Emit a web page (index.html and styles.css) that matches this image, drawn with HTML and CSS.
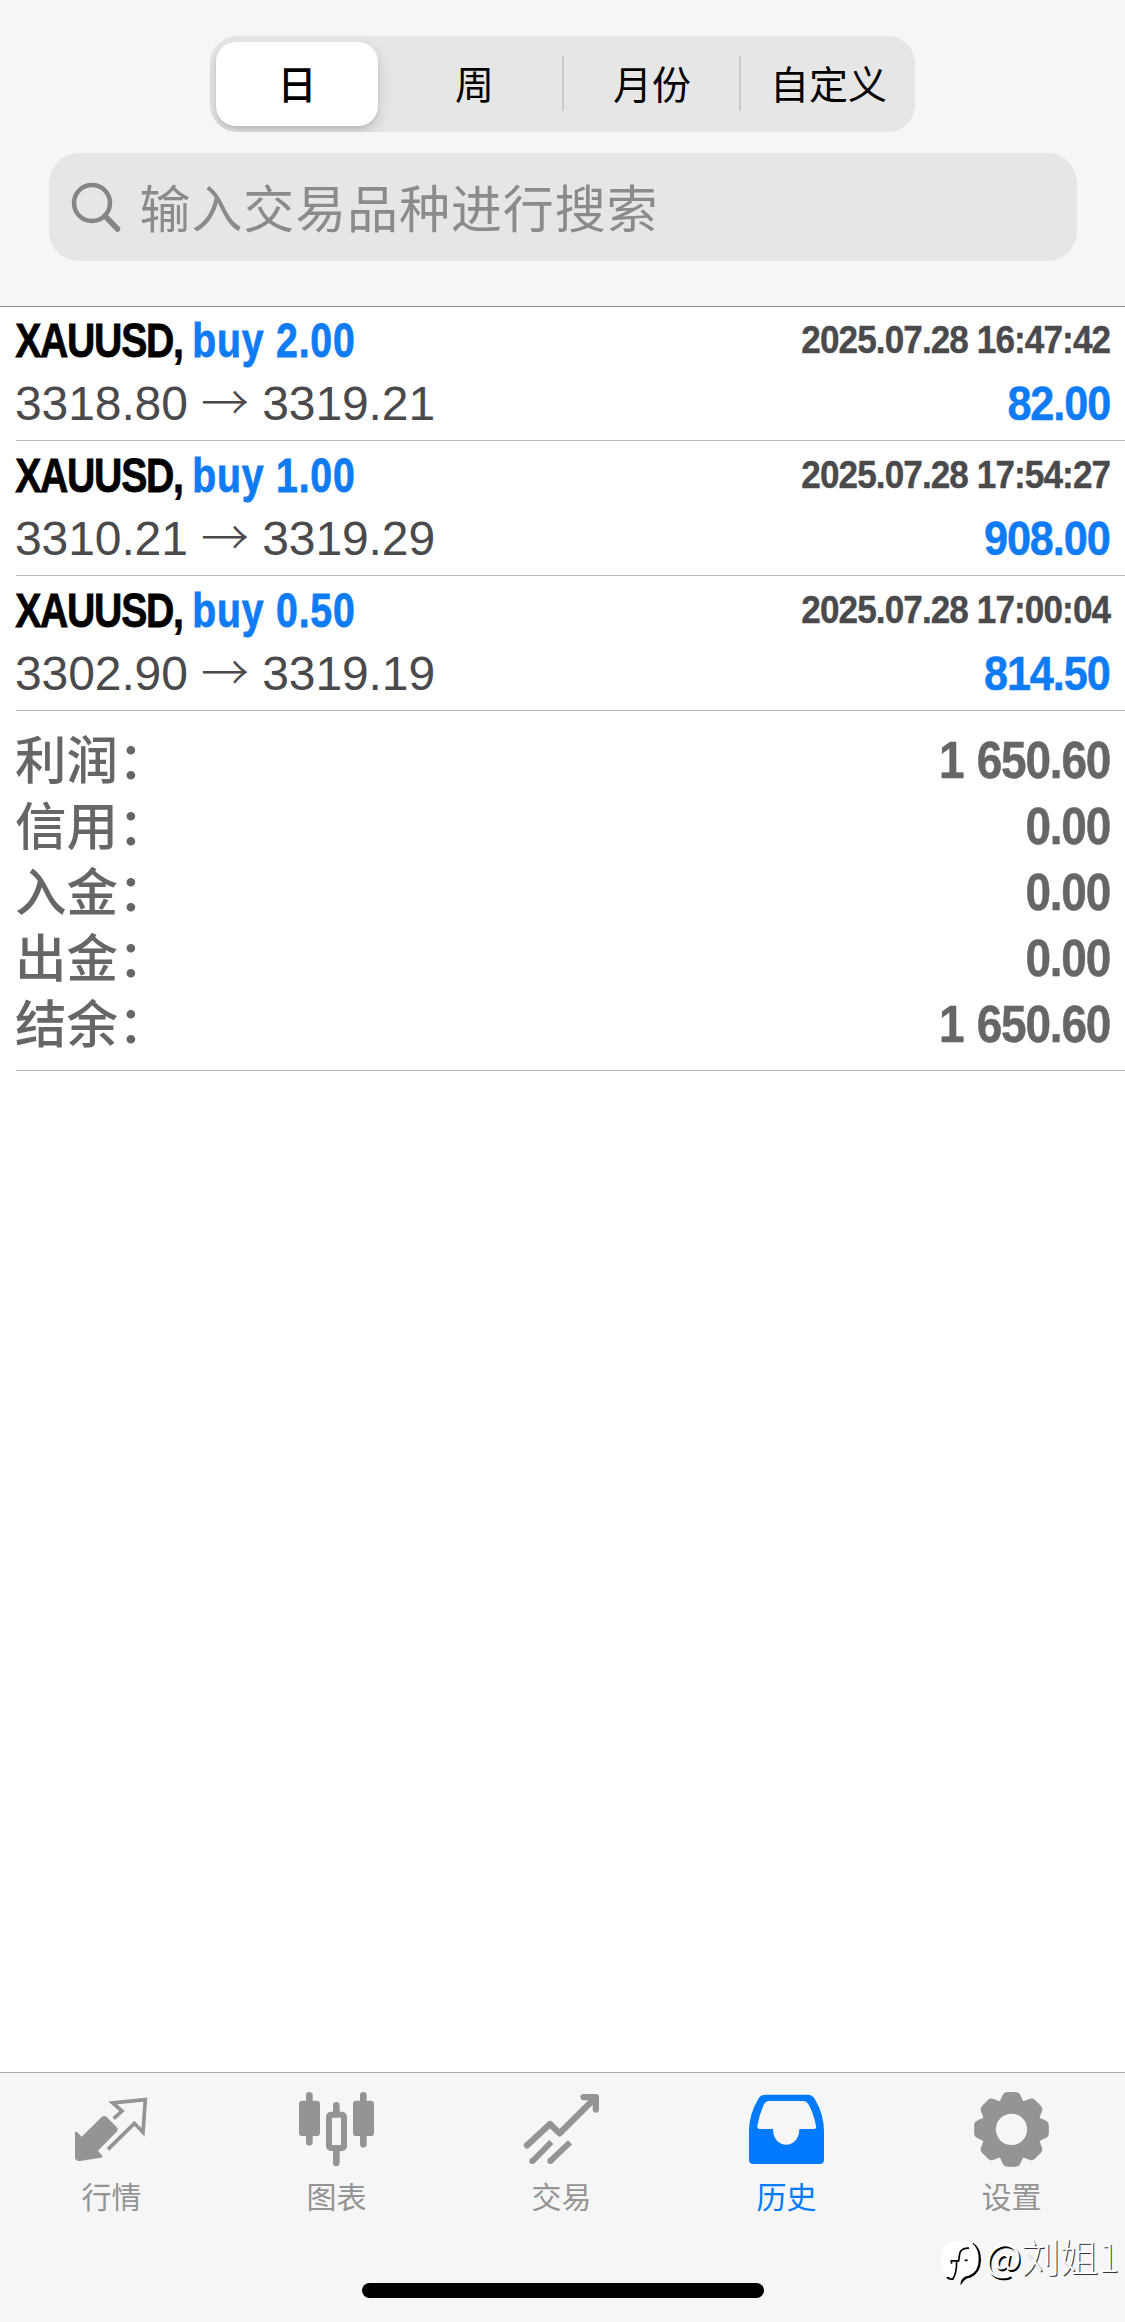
FILE: index.html
```html
<!DOCTYPE html>
<html lang="zh-CN">
<head>
<meta charset="utf-8">
<title>历史</title>
<link rel="stylesheet" href="styles.css">
</head>
<body>
<div class="app">
  <header class="header">
    <div class="segments">
      <div class="segment segment-active">日</div>
      <div class="segment">周</div>
      <div class="segment segment-divided">月份</div>
      <div class="segment segment-divided">自定义</div>
    </div>
    <div class="search">
      <svg class="search-icon" viewBox="0 0 52 52"><circle cx="22" cy="21" r="18" /><path class="handle" d="M35 34 L47.500 47" /></svg>
      <span class="search-text">输入交易品种进行搜索</span>
    </div>
  </header>

  <main class="content">
    <section class="deal">
      <div class="line"><div class="title"><span class="symbol">XAUUSD,</span><span class="side">buy 2.00</span></div><div class="time">2025.07.28 16:47:42</div></div>
      <div class="line"><div class="prices">3318.80 <span class="arrow">→</span> 3319.21</div><div class="profit">82.00</div></div>
    </section>
    <section class="deal">
      <div class="line"><div class="title"><span class="symbol">XAUUSD,</span><span class="side">buy 1.00</span></div><div class="time">2025.07.28 17:54:27</div></div>
      <div class="line"><div class="prices">3310.21 <span class="arrow">→</span> 3319.29</div><div class="profit">908.00</div></div>
    </section>
    <section class="deal">
      <div class="line"><div class="title"><span class="symbol">XAUUSD,</span><span class="side">buy 0.50</span></div><div class="time">2025.07.28 17:00:04</div></div>
      <div class="line"><div class="prices">3302.90 <span class="arrow">→</span> 3319.19</div><div class="profit">814.50</div></div>
    </section>
    <section class="summary">
      <div class="total"><span class="label">利润：</span><span class="amount">1 650.60</span></div>
      <div class="total"><span class="label">信用：</span><span class="amount">0.00</span></div>
      <div class="total"><span class="label">入金：</span><span class="amount">0.00</span></div>
      <div class="total"><span class="label">出金：</span><span class="amount">0.00</span></div>
      <div class="total"><span class="label">结余：</span><span class="amount">1 650.60</span></div>
    </section>
  </main>

  <footer class="footer">
    <nav class="tabs">
      <div class="tab">
        <svg class="tab-icon" viewBox="-120 42 675 300">
          <path class="solid" d="M105 216 Q109 214 114 219 L125 230 L185 171 Q193 164 201 172 L230 201 Q236 208 230 215 L174 272 L187 287 Q188 291 183 293 L120 303 Q105 304 105 292 Z" />
          <path class="thin" d="M221 176 L246 153 L218 129 L316 119 L309 217 L283 190 L204 268" />
        </svg>
        <span class="tab-label">行情</span>
      </div>
      <div class="tab">
        <svg class="tab-icon" viewBox="555 42 675 300">
          <path class="wick" d="M808 106 V247 M889 136 V163 M889 265 V308 M970 106 V253" />
          <rect class="solid" x="777" y="122" width="63" height="106" rx="10" />
          <rect class="solid" x="939" y="122" width="63" height="106" rx="10" />
          <rect class="hollow" x="867" y="164" width="45" height="100" rx="6" />
        </svg>
        <span class="tab-label">图表</span>
      </div>
      <div class="tab">
        <svg class="tab-icon" viewBox="-120 42 675 300">
          <path class="thick" d="M111 256 L180 192 L209 220 L316 113" />
          <path class="solid" d="M280 102 H317 Q327 102 327 112 V149 Q326 158 318 158 Q309 158 308 149 V121 H280 Q271 120 271 111 Q271 103 280 102 Z" />
          <path class="butt" d="M128 303 L184 246 M181 303 L240 247" />
          <circle class="solid" cx="127" cy="303" r="9" /><circle class="solid" cx="181" cy="303" r="9" />
        </svg>
        <span class="tab-label">交易</span>
      </div>
      <div class="tab tab-active">
        <svg class="tab-icon" viewBox="555 42 675 300">
          <path class="solid" fill-rule="evenodd" d="M826 104 H953 Q967 104 974 116 Q1002 163 1002 214 V299 Q1002 312 989 312 H790 Q777 312 777 299 V214 Q777 163 805 116 Q812 104 826 104 Z M835 123 Q826 124 821 134 Q808 163 802 198 Q801 207 809 207 H849 C849 270 928 270 928 207 H970 Q980 207 978 198 Q971 160 956 134 Q951 124 942 123 Z" />
        </svg>
        <span class="tab-label">历史</span>
      </div>
      <div class="tab">
        <svg class="tab-icon" viewBox="0 42 675 300">
          <defs><path id="tooth" d="M-44 -76 C-26 -86 -32 -112 -12 -112 H12 C32 -112 26 -86 44 -76 Z" /></defs>
          <g class="solid" transform="translate(334.500 208)">
            <use href="#tooth" /><use href="#tooth" transform="rotate(45)" /><use href="#tooth" transform="rotate(90)" /><use href="#tooth" transform="rotate(135)" /><use href="#tooth" transform="rotate(180)" /><use href="#tooth" transform="rotate(225)" /><use href="#tooth" transform="rotate(270)" /><use href="#tooth" transform="rotate(315)" />
            <circle r="87" />
            <circle class="hole" r="47" />
          </g>
        </svg>
        <span class="tab-label">设置</span>
      </div>
    </nav>
    <div class="home-indicator"></div>
  </footer>

  <div class="watermark">
    <svg class="watermark-logo" viewBox="0 0 126 140">
      <path class="mark-shade" d="M99 8 Q124 24 123 62 Q121 100 91 113 Q74 113 62 136 Q60 120 72 108 Z" />
      <path class="mark-shade" d="M18 112 Q28 122 40 119 L42 104 Z" />
      <path class="mark-face" d="M40 2 H82 Q116 14 116 58 Q116 96 86 107 Q69 108 60 126 L60 114 H32 Q2 102 2 58 Q4 14 40 2 Z" />
      <path class="mark-line" d="M87 24 Q59 22 58 48 L56 62 H32 M50 63 Q50 100 38 117" />
      <rect class="mark-shade" x="74" y="58" width="9" height="5" />
      <path class="mark-shade" d="M32 60 V71 H37 V64 Z" />
    </svg>
    <span class="watermark-text"><span class="at">@</span>刘姐1</span>
  </div>
</div>
</body>
</html>
```
FILE: styles.css
```css
* { box-sizing: border-box; }

body {
  margin: 0;
  background: #fff;
  font-family: "Liberation Sans", "Noto Sans CJK SC", sans-serif;
}

.app {
  position: relative;
  display: flex;
  flex-direction: column;
  width: 1125px;
  height: 2322px;
  overflow: hidden;
}

/* Header */
.header {
  height: 307px;
  margin-bottom: -1px;
  padding-top: 36px;
  background: #f6f6f6;
  border-bottom: 1px solid #8c8c8c;
  font-family: "Noto Sans CJK SC", sans-serif;
}

.segments {
  display: grid;
  grid-template-columns: 174px 178px 177px 176px;
  width: 705px;
  height: 96px;
  margin: 0 auto;
  border-radius: 27px;
  background: #e6e6e6;
  overflow: hidden;
}

.segment {
  display: flex;
  align-items: center;
  justify-content: center;
  padding: 0 0 4px 3px;
  font-size: 39px;
  line-height: 56px;
  color: #000;
}

.segment-active {
  margin: 6px;
  padding-left: 0;
  border-radius: 20px;
  background: #fff;
  box-shadow: 0 6px 14px rgba(0, 0, 0, .16), 0 2px 3px rgba(0, 0, 0, .06);
  font-weight: 500;
}

.segment-divided {
  background: linear-gradient(#cacaca, #cacaca) 0 20px / 2px 55px no-repeat;
}

.search {
  display: flex;
  align-items: center;
  width: 1028px;
  height: 108px;
  margin: 21px auto 0;
  padding-left: 21px;
  border-radius: 30px;
  background: #e6e6e8;
}

.search-icon {
  flex: none;
  width: 52px;
  height: 52px;
  margin-top: 2px;
  fill: none;
  stroke: #858587;
  stroke-width: 4.5;
  stroke-linecap: round;
}

.handle { stroke-width: 5.5; }

.search-text {
  margin: -3px 0 0 18px;
  font-size: 51px;
  line-height: 74px;
  letter-spacing: .9px;
  color: #8b8b8e;
}

/* Deals */
.content { flex: 1; }

.deal {
  height: 135px;
  margin-left: 16px;
  padding: 2px 15px 0 0;
  border-bottom: 1px solid #b9b9bc;
}

.line {
  display: flex;
  justify-content: space-between;
  height: 64px;
  line-height: 64px;
  white-space: nowrap;
}

.title,
.time,
.profit,
.amount {
  font-weight: 700;
}

.title {
  display: flex;
  gap: 12px;
  font-size: 49px;
  -webkit-text-stroke: .8px currentColor;
  transform: scaleX(.8);
  transform-origin: 0 50%;
}

.symbol { margin-left: -1px; letter-spacing: -1.600px; color: #000; }
.side { letter-spacing: 1px; color: #0f7bf5; }

.time {
  font-size: 39px;
  letter-spacing: -1px;
  line-height: 64px;
  color: #4a4a4d;
  -webkit-text-stroke: .4px currentColor;
  transform: scaleX(.9);
  transform-origin: 100% 50%;
}

.prices {
  margin-left: -1px;
  font-size: 48px;
  letter-spacing: -.1px;
  color: #4a4a4d;
}

.arrow {
  font-family: "Noto Sans CJK SC", sans-serif;
  font-weight: 300;
  line-height: 1px;
}

.profit {
  font-size: 48px;
  letter-spacing: -1.200px;
  color: #0f7bf5;
  -webkit-text-stroke: .5px currentColor;
  transform: scaleX(.9);
  transform-origin: 100% 50%;
}

/* Totals */
.summary {
  height: 360px;
  margin-left: 16px;
  padding: 17px 15px 0 0;
  border-bottom: 1px solid #b9b9bc;
}

.total {
  display: flex;
  justify-content: space-between;
  height: 66px;
  line-height: 66px;
  color: #666;
}

.label {
  margin: -4px 0 0 -1px;
  font-family: "Noto Sans CJK SC", sans-serif;
  font-size: 51.500px;
  font-weight: 500;
}

.amount {
  font-size: 51px;
  letter-spacing: -1.300px;
  word-spacing: 2px;
  -webkit-text-stroke: .5px currentColor;
  transform: scaleX(.9);
  transform-origin: 100% 50%;
}

/* Bottom bar */
.footer {
  height: 250px;
  padding-top: 1px;
  border-top: 1px solid #adadad;
  background: #f6f6f6;
}

.tabs { display: grid; grid-template-columns: repeat(5, 225px); }

.tab {
  display: flex;
  flex-direction: column;
  align-items: center;
  color: #949494;
}

.tab-active { color: #007aff; }
.tab-icon { display: block; width: 225px; height: 100px; }
.solid { fill: currentColor; }
.hole { fill: #f6f6f6; }
.wick, .thick, .butt, .thin { fill: none; stroke: currentColor; }
.wick { stroke-width: 20; stroke-linecap: round; }
.thick { stroke-width: 19; stroke-linecap: round; stroke-linejoin: round; }
.butt { stroke-width: 18; }
.thin { stroke-width: 11; }
.hollow { fill: #f6f6f6; stroke: currentColor; stroke-width: 18; }

.tab-label {
  margin-right: 2px;
  font-family: "Noto Sans CJK SC", sans-serif;
  font-size: 30px;
  line-height: 42px;
}

.home-indicator {
  width: 402px;
  height: 15px;
  margin: 67px auto 0;
  border-radius: 8px;
  background: #000;
}

/* Account watermark over the bottom right corner */
.watermark {
  position: absolute;
  left: 940px;
  top: 2238px;
  display: flex;
  align-items: flex-start;
  color: #fff;
}

.watermark-logo { width: 42px; height: 47px; margin-top: 2px; }
.mark-face { fill: #fff; }
.mark-shade { fill: #000; }
.mark-line { fill: none; stroke: #000; stroke-width: 5; }

.watermark-text {
  margin: -6px 0 0 3px;
  font-family: "Noto Sans CJK SC", sans-serif;
  font-size: 38.500px;
  font-weight: 300;
  line-height: 46px;
  text-shadow: 1px 1px 0 #333;
  white-space: nowrap;
}

.at { font-weight: 400; text-shadow: 1.500px 1.500px 0 #000; }
```
